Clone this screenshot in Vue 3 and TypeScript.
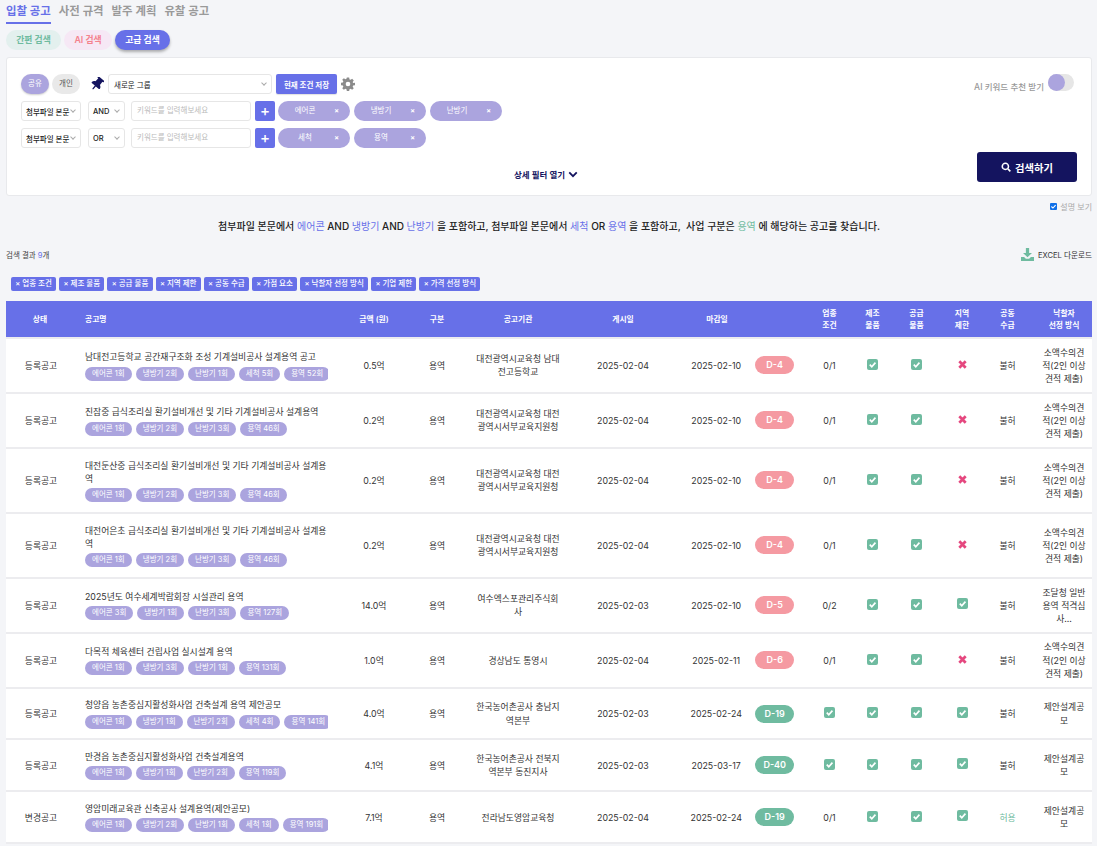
<script setup lang="ts">
interface Row {
  status: string; name: string; kws: string[]; price: string; org: string; posted: string; due: string;
  d: string; hot: boolean; cond: string; make: boolean; supply: boolean; region: boolean; joint: string; method: string;
}
const M1 = '소액수의견적(2인 이상 견적 제출)';
const M2 = '제안설계공모';
const rows: Row[] = [
  { status: '등록공고', name: '남대전고등학교 공간재구조화 조성 기계설비공사 설계용역 공고', kws: ['에어콘 1회', '냉방기 2회', '난방기 1회', '세척 5회', '용역 52회'], price: '0.5억', org: '대전광역시교육청 남대전고등학교', posted: '2025-02-04', due: '2025-02-10', d: 'D-4', hot: true, cond: '0/1', make: true, supply: true, region: false, joint: '불허', method: M1 },
  { status: '등록공고', name: '진잠중 급식조리실 환기설비개선 및 기타 기계설비공사 설계용역', kws: ['에어콘 1회', '냉방기 2회', '난방기 3회', '용역 46회'], price: '0.2억', org: '대전광역시교육청 대전광역시서부교육지원청', posted: '2025-02-04', due: '2025-02-10', d: 'D-4', hot: true, cond: '0/1', make: true, supply: true, region: false, joint: '불허', method: M1 },
  { status: '등록공고', name: '대전둔산중 급식조리실 환기설비개선 및 기타 기계설비공사 설계용역', kws: ['에어콘 1회', '냉방기 2회', '난방기 3회', '용역 46회'], price: '0.2억', org: '대전광역시교육청 대전광역시서부교육지원청', posted: '2025-02-04', due: '2025-02-10', d: 'D-4', hot: true, cond: '0/1', make: true, supply: true, region: false, joint: '불허', method: M1 },
  { status: '등록공고', name: '대전어은초 급식조리실 환기설비개선 및 기타 기계설비공사 설계용역', kws: ['에어콘 1회', '냉방기 2회', '난방기 3회', '용역 46회'], price: '0.2억', org: '대전광역시교육청 대전광역시서부교육지원청', posted: '2025-02-04', due: '2025-02-10', d: 'D-4', hot: true, cond: '0/1', make: true, supply: true, region: false, joint: '불허', method: M1 },
  { status: '등록공고', name: '2025년도 여수세계박람회장 시설관리 용역', kws: ['에어콘 3회', '냉방기 1회', '난방기 3회', '용역 127회'], price: '14.0억', org: '여수엑스포관리주식회사', posted: '2025-02-03', due: '2025-02-10', d: 'D-5', hot: true, cond: '0/2', make: true, supply: true, region: true, joint: '불허', method: '조달청 일반용역 적격심사...' },
  { status: '등록공고', name: '다목적 체육센터 건립사업 실시설계 용역', kws: ['에어콘 1회', '냉방기 3회', '난방기 1회', '용역 131회'], price: '1.0억', org: '경상남도 통영시', posted: '2025-02-04', due: '2025-02-11', d: 'D-6', hot: true, cond: '0/1', make: true, supply: true, region: false, joint: '불허', method: M1 },
  { status: '등록공고', name: '청양읍 농촌중심지활성화사업 건축설계 용역 제안공모', kws: ['에어콘 1회', '냉방기 1회', '난방기 2회', '세척 4회', '용역 141회'], price: '4.0억', org: '한국농어촌공사 충남지역본부', posted: '2025-02-03', due: '2025-02-24', d: 'D-19', hot: false, cond: 'check', make: true, supply: true, region: true, joint: '불허', method: M2 },
  { status: '등록공고', name: '만경읍 농촌중심지활성화사업 건축설계용역', kws: ['에어콘 1회', '냉방기 1회', '난방기 2회', '용역 119회'], price: '4.1억', org: '한국농어촌공사 전북지역본부 동진지사', posted: '2025-02-03', due: '2025-03-17', d: 'D-40', hot: false, cond: 'check', make: true, supply: true, region: true, joint: '불허', method: M2 },
  { status: '변경공고', name: '영암미래교육관 신축공사 설계용역(제안공모)', kws: ['에어콘 1회', '냉방기 2회', '난방기 1회', '세척 1회', '용역 191회'], price: '7.1억', org: '전라남도영암교육청', posted: '2025-02-04', due: '2025-02-24', d: 'D-19', hot: false, cond: '0/1', make: true, supply: true, region: true, joint: '허용', method: M2 },
];
const chips = ['업종 조건', '제조 물품', '공급 물품', '지역 제한', '공동 수급', '가점 요소', '낙찰자 선정 방식', '기업 제한', '가격 선정 방식'];
const tabs = ['입찰 공고', '사전 규격', '발주 계획', '유찰 공고'];
</script>

<template>
  <div class="page">
    <nav class="tabs">
      <span v-for="(t, i) in tabs" :key="t" class="tab" :class="{ on: i === 0 }">{{ t }}</span>
    </nav>
    <div class="modes">
      <span class="mode green">간편 검색</span>
      <span class="mode pink">AI 검색</span>
      <span class="mode blue">고급 검색</span>
    </div>

    <section class="panel">
      <div class="panel-top">
        <div class="line">
          <span class="pill active">공유</span>
          <span class="pill">개인</span>
          <svg class="pin" viewBox="0 0 384 512"><path fill="#14145f" transform="rotate(40 192 256)" d="M298 214l-8-150h30c9 0 16-7 16-16V24c0-13-11-24-24-24H72C59 0 48 11 48 24v24c0 9 7 16 16 16h30l-8 150C38 236 0 278 0 328c0 13 11 24 24 24h144v136l24 24 24-24V352h144c13 0 24-11 24-24 0-50-38-92-86-114z"/></svg>
          <div class="select group"><span>새로운 그룹</span><i class="caret" /></div>
          <button class="save">현재 조건 저장</button>
          <svg class="gear" viewBox="0 0 24 24"><path fill="#8b8b8b" fill-rule="evenodd" d="M10 1h4l.6 3.1 1.9.8L19.1 3l2.8 2.8-1.9 2.6.8 1.9L24 10v4l-3.2.6-.8 1.9 1.9 2.6-2.8 2.8-2.6-1.900-1.900.8L14 24h-4l-.6-3.200-1.900-.8L4.900 21.900 2.100 19.100 4 16.500l-.8-1.900L0 14v-4l3.200-.7.8-1.900L2.100 4.800 4.900 2 7.500 3.900l1.900-.8zM12 8a4 4 0 100 8 4 4 0 000-8z"/></svg>
          <div class="ai">
            <span>AI 키워드 추천 받기</span>
            <span class="toggle"><i /></span>
          </div>
        </div>
        <div class="line">
          <div class="select field"><span>첨부파일 본문</span><i class="caret" /></div>
          <div class="select op"><span>AND</span><i class="caret" /></div>
          <div class="kw">키워드를 입력해보세요</div>
          <button class="plus">+</button>
          <span class="kwtag">에어콘<b>×</b></span>
          <span class="kwtag">냉방기<b>×</b></span>
          <span class="kwtag">난방기<b>×</b></span>
        </div>
        <div class="line">
          <div class="select field"><span>첨부파일 본문</span><i class="caret" /></div>
          <div class="select op"><span>OR</span><i class="caret" /></div>
          <div class="kw">키워드를 입력해보세요</div>
          <button class="plus">+</button>
          <span class="kwtag">세척<b>×</b></span>
          <span class="kwtag">용역<b>×</b></span>
        </div>
      </div>
      <div class="panel-bottom">
        <div class="detail">
          상세 필터 열기
          <svg viewBox="0 0 12 8" width="10" height="7"><path d="M1.500 1.500L6 6l4.500-4.500" fill="none" stroke="#14145f" stroke-width="2.200"/></svg>
        </div>
        <button class="search">
          <svg viewBox="0 0 16 16" width="10" height="10"><circle cx="7" cy="7" r="5" fill="none" stroke="#fff" stroke-width="2.400"/><path d="M11 11l4 4" stroke="#fff" stroke-width="2.600"/></svg>
          검색하기
        </button>
      </div>
    </section>

    <div class="explain-toggle">
      <span class="cb"><svg viewBox="0 0 10 10"><path d="M2 5l2.200 2.200L8 3" fill="none" stroke="#fff" stroke-width="1.600"/></svg></span>
      설명 보기
    </div>
    <p class="explain">
      첨부파일 본문에서 <em>에어콘</em> AND <em>냉방기</em> AND <em>난방기</em> 을 포함하고, 첨부파일 본문에서 <em>세척</em> OR <em>용역</em> 을 포함하고,&nbsp; 사업 구분은 <em class="g">용역</em> 에 해당하는 공고를 찾습니다.
    </p>

    <div class="result-bar">
      <span>검색 결과 <em>9</em>개</span>
      <span class="excel">
        <svg viewBox="0 0 16 16" width="13" height="13"><path fill="#6fbba0" d="M6 0h4v6h3.500L8 11.500 2.500 6H6zM0 11h3.800L6 13.200h4L12.200 11H16v5H0z"/></svg>
        EXCEL 다운로드
      </span>
    </div>

    <div class="chips">
      <span v-for="c in chips" :key="c" class="chip">× {{ c }}</span>
    </div>

    <table class="grid">
      <colgroup>
        <col style="width:66px" /><col style="width:273px" /><col style="width:58px" /><col style="width:68px" />
        <col style="width:94px" /><col style="width:116px" /><col style="width:127px" /><col style="width:43px" />
        <col style="width:43px" /><col style="width:45px" /><col style="width:46px" /><col style="width:45px" /><col style="width:62px" />
      </colgroup>
      <thead>
        <tr>
          <th class="first">상태</th><th class="left">공고명</th><th>금액 (원)</th><th>구분</th><th>공고기관</th><th>게시일</th>
          <th class="dueh">마감일</th><th>업종<br />조건</th><th>제조<br />물품</th><th>공급<br />물품</th><th>지역<br />제한</th><th>공동<br />수급</th><th class="lasth">낙찰자<br />선정 방식</th>
        </tr>
      </thead>
      <tbody>
        <tr v-for="r in rows" :key="r.name">
          <td class="first">{{ r.status }}</td>
          <td class="name">
            <div class="title">{{ r.name }}</div>
            <div class="kws"><span v-for="k in r.kws" :key="k" class="kwc">{{ k }}</span></div>
          </td>
          <td>{{ r.price }}</td>
          <td>용역</td>
          <td class="org">{{ r.org }}</td>
          <td>{{ r.posted }}</td>
          <td>
            <div class="due"><span class="date">{{ r.due }}</span><span class="badge" :class="r.hot ? 'hot' : 'ok'">{{ r.d }}</span></div>
          </td>
          <td>
            <svg v-if="r.cond === 'check'" class="ic" viewBox="0 0 12 12"><rect width="12" height="12" rx="2.200" fill="#6fbba0"/><path d="M3 6.200l2.200 2.200L9.200 4" fill="none" stroke="#fff" stroke-width="1.800"/></svg>
            <template v-else>{{ r.cond }}</template>
          </td>
          <td><svg class="ic" viewBox="0 0 12 12"><rect width="12" height="12" rx="2.200" fill="#6fbba0"/><path d="M3 6.200l2.200 2.200L9.200 4" fill="none" stroke="#fff" stroke-width="1.800"/></svg></td>
          <td><svg class="ic" viewBox="0 0 12 12"><rect width="12" height="12" rx="2.200" fill="#6fbba0"/><path d="M3 6.200l2.200 2.200L9.200 4" fill="none" stroke="#fff" stroke-width="1.800"/></svg></td>
          <td>
            <svg v-if="r.region" class="ic up" viewBox="0 0 12 12"><rect width="12" height="12" rx="2.200" fill="#6fbba0"/><path d="M3 6.200l2.200 2.200L9.200 4" fill="none" stroke="#fff" stroke-width="1.800"/></svg>
            <svg v-else class="ic" viewBox="0 0 12 12"><path d="M2.500 2.500l7 7M9.500 2.500l-7 7" fill="none" stroke="#e5487f" stroke-width="3"/></svg>
          </td>
          <td :class="{ allow: r.joint === '허용' }">{{ r.joint }}</td>
          <td class="method">{{ r.method }}</td>
        </tr>
      </tbody>
    </table>
  </div>
</template>

<style>
html, body { margin: 0; background: #f4f5f8; }
</style>

<style scoped>
.page {
  box-sizing: border-box;
  width: 1097px;
  height: 846px;
  overflow: hidden;
  padding: 0 5px 0 6px;
  background: #f4f5f8;
  font-family: Inter, "Noto Sans CJK KR", sans-serif;
  color: #222;
}
.tabs { display: flex; gap: 8px; height: 24px; }
.tab { font-size: 11.400px; font-weight: 600; color: #9a9a9a; line-height: 23px; height: 24px; box-sizing: border-box; }
.tab.on { color: #6770e8; border-bottom: 2px solid #6770e8; }
.modes { display: flex; gap: 3px; margin-top: 6px; height: 20px; }
.mode { width: 55px; text-align: center; font-size: 8.800px; font-weight: 600; line-height: 20px; border-radius: 10px; }
.green { background: #e3f0ee; color: #6fbba0; }
.pink { width: 48px; background: #f6e8f5; color: #f4828d; }
.blue { background: #6770e8; color: #fff; box-shadow: 0 2px 3px rgba(0,0,0,.3); }

.panel { box-sizing: border-box; margin-top: 7px; height: 139px; background: #fff; border: 1px solid #e8e9ec; border-radius: 3px; padding: 16px 14px 13px; display: flex; flex-direction: column; justify-content: space-between; }
.panel-top { display: flex; flex-direction: column; gap: 7px; }
.line { display: flex; align-items: center; height: 20px; }
.pill { width: 28px; height: 20px; line-height: 20px; text-align: center; border-radius: 10px; background: #e9e9e9; color: #555; font-size: 7.500px; margin-right: 3px; }
.pill.active { background: #aba4de; color: #fff; box-shadow: 0 1px 2px rgba(0,0,0,.2); }
.pin { width: 14px; height: 14px; margin: 0 4px 0 7px; }
.select { box-sizing: border-box; height: 20px; background: #fff; border: 1px solid #e6e6e6; border-radius: 3px; display: flex; align-items: center; justify-content: space-between; padding: 0 4px; font-size: 7.500px; color: #222; white-space: nowrap; font-weight: 500; }
.caret { width: 3px; height: 3px; border-right: 1px solid #aaa; border-bottom: 1px solid #aaa; transform: rotate(45deg); margin: -2px 1px 0 0; flex: none; }
.group { width: 164px; font-weight: 400; padding-left: 5px; }
.save { width: 61px; height: 20px; margin-left: 4px; border: 0; background: #6770e8; color: #fff; font: 600 7.500px Inter, "Noto Sans CJK KR", sans-serif; border-radius: 2px; padding: 0; box-shadow: 0 1px 1px rgba(0,0,0,.12); }
.gear { width: 14px; height: 14px; margin-left: 4px; }
.ai { margin-left: auto; margin-right: 3px; display: flex; align-items: center; gap: 4px; font-size: 8.500px; font-weight: 500; color: #999; padding-top: 3px; }
.toggle { display: block; width: 26px; height: 17px; border-radius: 9px; background: #e6e6e6; position: relative; margin-top: -7px; }
.toggle i { position: absolute; left: 0; top: 0; width: 17px; height: 17px; border-radius: 50%; background: #aba4de; }
.field { width: 60px; }
.op { width: 37px; margin-left: 7px; }
.kw { box-sizing: border-box; width: 120px; height: 20px; margin-left: 6px; border: 1px solid #e6e6e6; border-radius: 3px; font-size: 7.500px; line-height: 18px; padding-left: 5px; color: #bbb; }
.plus { width: 20px; height: 20px; margin-left: 4px; border: 0; border-radius: 2px; background: #6770e8; color: #fff; font: 500 15px/20px Inter, sans-serif; padding: 0; }
.kwtag { position: relative; box-sizing: border-box; width: 72px; height: 20px; margin-left: 3px; border-radius: 10px; background: #aba4de; color: #fff; font-size: 7.500px; line-height: 20px; text-align: center; padding-right: 18px; }
.kwtag + .kwtag { margin-left: 4px; }
.kwtag b { position: absolute; right: 11px; top: 0; font-weight: 700; font-size: 7px; }

.panel-bottom { position: relative; display: flex; justify-content: flex-end; }
.detail { position: absolute; left: 0; right: 6px; bottom: 2px; display: flex; justify-content: center; align-items: center; gap: 3px; font-size: 8.500px; font-weight: 600; color: #14145f; }
.search { width: 100px; height: 30px; margin-right: 0; border: 0; border-radius: 3px; background: #14145f; color: #fff; font: 600 10.300px Inter, "Noto Sans CJK KR", sans-serif; display: flex; align-items: center; justify-content: center; gap: 4px; }

.explain-toggle { display: flex; justify-content: flex-end; align-items: center; gap: 3px; height: 12px; margin-top: 4px; font-size: 8px; color: #aaa; }
.cb { width: 7px; height: 7px; background: #0f6fe8; border-radius: 1px; display: block; }
.cb svg { display: block; }
.explain { margin: 7px 0 0; text-align: center; font-size: 10px; line-height: 15px; font-weight: 500; color: #222; }
.explain em { font-style: normal; color: #6770e8; font-weight: 400; }
.explain em.g { color: #6fbba0; }

.result-bar { display: flex; justify-content: space-between; align-items: center; height: 14px; margin-top: 13px; font-size: 7.500px; color: #444; }
.result-bar em { font-style: normal; color: #6770e8; }
.excel { display: flex; align-items: center; gap: 4px; color: #333; font-size: 7.600px; }
.chips { display: flex; gap: 3px; margin: 16px 0 0 5px; height: 14px; }
.chip { height: 14px; line-height: 14px; padding: 0 4.300px; background: #6770e8; color: #fff; font-size: 7.500px; font-weight: 500; border-radius: 2px; white-space: nowrap; }

.grid { width: 1086px; table-layout: fixed; border-collapse: separate; border-spacing: 0; margin-top: 10px; font-size: 8.800px; line-height: 1.5; }
th { height: 36px; padding: 0; background: #6770e8; color: #fff; font-size: 7.800px; font-weight: 600; line-height: 12px; text-align: center; border-bottom: 2px solid #ececef; }
th.left { text-align: left; padding-left: 13px; }
th.dueh { padding-right: 55px; box-sizing: border-box; }
th.first { padding-left: 2px; }
th.lasth { padding-left: 6px; }
td { padding: 6.700px 0; background: #fff; border-bottom: 2px solid #ececef; text-align: center; color: #333; }
td.first { padding-left: 4px; }
td.name { text-align: left; padding: 9.800px 12px 9.800px 13px; }
.title { color: #333; }
.kws { display: flex; gap: 4px; margin-top: 3px; overflow: hidden; width: 243px; }
.kwc { flex: none; height: 14px; line-height: 14px; padding: 0 7px; border-radius: 7px; background: #aba4de; color: #fff; font-size: 7.500px; white-space: nowrap; }
td.org { padding-left: 4px; padding-right: 4px; }
.due { display: flex; align-items: center; justify-content: flex-end; padding-right: 14px; gap: 0; }
.date { width: 73px; text-align: center; }
.badge { width: 40px; height: 18px; line-height: 18px; margin-left: 4px; border-radius: 9px; color: #fff; font-size: 9px; font-weight: 600; }
.hot { background: #f59aa2; }
.ok { background: #6fbba0; }
.ic { width: 11px; height: 11px; display: block; margin: -2px auto 0; }
.ic.up { margin-top: -3px; }
.allow { color: #6fbba0; }
td.method { padding-left: 10px; padding-right: 4px; }
</style>
